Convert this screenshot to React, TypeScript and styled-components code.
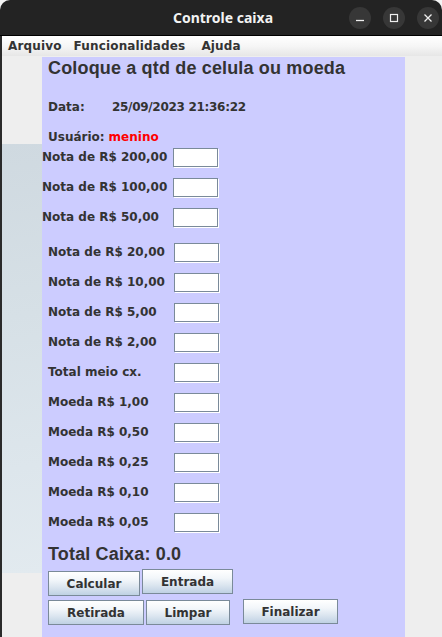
import React from 'react';
import styled, { createGlobalStyle } from 'styled-components';

const GlobalStyle = createGlobalStyle`
  html, body {
    margin: 0;
    padding: 0;
    background: #f4f4f4;
  }
  * {
    box-sizing: border-box;
  }
`;

const Window = styled.div`
  width: 442px;
  height: 637px;
  display: flex;
  flex-direction: column;
  overflow: hidden;
`;

const TitleBar = styled.div`
  height: 36px;
  flex: none;
  background: #232323;
  border-radius: 10px 10px 0 0;
  border-bottom: 1px solid #000;
  display: grid;
  grid-template-columns: 1fr auto 1fr;
  align-items: center;
`;

const Title = styled.div`
  grid-column: 2;
  padding-left: 4px;
  color: #f2f2f2;
  font-family: 'Noto Sans', 'DejaVu Sans', sans-serif;
  font-weight: 700;
  font-size: 14px;
`;

const Controls = styled.div`
  grid-column: 3;
  justify-self: end;
  display: flex;
  gap: 12px;
  padding-right: 3px;
`;

const CtrlButton = styled.div`
  width: 22px;
  height: 22px;
  border-radius: 50%;
  background: #373737;
  display: flex;
  align-items: center;
  justify-content: center;
`;

const MenuBar = styled.div`
  height: 20px;
  flex: none;
  display: flex;
  align-items: center;
  background: linear-gradient(#ffffff, #f6f6f6 50%, #e6e6e6);
  border-left: 2px solid #2a2a2a;
`;

const MenuItem = styled.div<{ $gap: number }>`
  margin-left: ${p => p.$gap}px;
  font-family: 'DejaVu Sans', sans-serif;
  font-weight: 700;
  font-size: 12px;
  letter-spacing: 0.15px;
  color: #333333;
`;

const Body = styled.div`
  flex: 1;
  display: flex;
  background: #eeeeee;
  border-left: 2px solid #2a2a2a;
  padding-top: 1px;
`;

const SideStrip = styled.div`
  width: 40px;
  flex: none;
  display: flex;
  flex-direction: column;
`;

const SidePicture = styled.div`
  margin-top: 87px;
  height: 429px;
  background: linear-gradient(170deg, #cfd9e0 0%, #d6e0e6 40%, #dde6ec 75%, #e2eaef 100%);
`;

const Panel = styled.div`
  width: 363px;
  flex: none;
  background: #ccccff;
  display: flex;
  flex-direction: column;
`;

const Heading = styled.div<{ $top?: number }>`
  margin-top: ${p => p.$top ?? 0}px;
  padding-left: 6px;
  font-family: 'Liberation Sans', Arial, sans-serif;
  font-weight: 700;
  font-size: 18px;
  line-height: 22px;
  letter-spacing: 0.16px;
  color: #333333;
  white-space: nowrap;
`;

const InfoLine = styled.div<{ $top: number }>`
  margin-top: ${p => p.$top}px;
  padding-left: 6px;
  display: flex;
  font-family: 'DejaVu Sans', sans-serif;
  font-weight: 700;
  font-size: 12px;
  line-height: 16px;
  color: #333333;
  white-space: nowrap;
`;

const InfoKey = styled.span<{ $width?: number }>`
  display: inline-block;
  width: ${p => (p.$width ? `${p.$width}px` : 'auto')};
  margin-right: ${p => (p.$width ? 0 : 4)}px;
`;

const DateText = styled.span`
  letter-spacing: -0.3px;
`;

const UserName = styled.span`
  color: #ff0000;
`;

const Row = styled.div<{ $top: number; $labelX: number; $fieldX: number }>`
  margin-top: ${p => p.$top}px;
  height: 19px;
  display: grid;
  grid-template-columns: ${p => p.$fieldX}px 45px;
  align-items: center;
  padding-left: ${p => p.$labelX}px;
`;

const RowLabel = styled.span`
  font-family: 'DejaVu Sans', sans-serif;
  font-weight: 700;
  font-size: 12px;
  line-height: 16px;
  color: #333333;
  white-space: nowrap;
  margin-top: -2px;
`;

const Field = styled.input`
  width: 45px;
  height: 19px;
  margin: 0;
  padding: 0 2px;
  border: 1px solid #7a8a99;
  box-shadow: 1px 1px 0 #ffffff;
  background: #ffffff;
  outline: none;
  font-family: 'DejaVu Sans', sans-serif;
  font-size: 12px;
`;

const ButtonRow = styled.div<{ $top: number }>`
  margin-top: ${p => p.$top}px;
  padding-left: 6px;
  display: flex;
  align-items: flex-start;
`;

const SwingButton = styled.button<{ $w: number; $dy?: number; $gap?: number }>`
  width: ${p => p.$w}px;
  height: 25px;
  margin: ${p => p.$dy ?? 0}px 0 0 ${p => p.$gap ?? 0}px;
  padding: 0;
  border: 1px solid #7a8a99;
  background: linear-gradient(#ffffff 0%, #f2f6fa 35%, #dce6f0 65%, #bfd1e3 100%);
  font-family: 'DejaVu Sans', sans-serif;
  font-weight: 700;
  font-size: 12px;
  color: #333333;
  cursor: pointer;
`;

type Denom = { label: string; top: number; labelX: number; fieldX: number };

const denoms: Denom[] = [
  { label: 'Nota de R$ 200,00', top: 3, labelX: 0, fieldX: 131 },
  { label: 'Nota de R$ 100,00', top: 11, labelX: 0, fieldX: 131 },
  { label: 'Nota de R$ 50,00', top: 11, labelX: 0, fieldX: 131 },
  { label: 'Nota de R$ 20,00', top: 16, labelX: 6, fieldX: 126 },
  { label: 'Nota de R$ 10,00', top: 11, labelX: 6, fieldX: 126 },
  { label: 'Nota de R$ 5,00', top: 11, labelX: 6, fieldX: 126 },
  { label: 'Nota de R$ 2,00', top: 11, labelX: 6, fieldX: 126 },
  { label: 'Total meio cx.', top: 11, labelX: 6, fieldX: 126 },
  { label: 'Moeda R$ 1,00', top: 11, labelX: 6, fieldX: 126 },
  { label: 'Moeda R$ 0,50', top: 11, labelX: 6, fieldX: 126 },
  { label: 'Moeda R$ 0,25', top: 11, labelX: 6, fieldX: 126 },
  { label: 'Moeda R$ 0,10', top: 11, labelX: 6, fieldX: 126 },
  { label: 'Moeda R$ 0,05', top: 11, labelX: 6, fieldX: 126 },
];

export default function App() {
  return (
    <>
      <GlobalStyle />
      <Window>
        <TitleBar>
          <Title>Controle caixa</Title>
          <Controls>
            <CtrlButton>
              <svg width="10" height="10" viewBox="0 0 10 10">
                <path d="M1 7.5h8" stroke="#eeeeee" strokeWidth="1.3" />
              </svg>
            </CtrlButton>
            <CtrlButton>
              <svg width="10" height="10" viewBox="0 0 10 10">
                <rect x="1.5" y="1.5" width="7" height="7" fill="none" stroke="#eeeeee" strokeWidth="1.2" />
              </svg>
            </CtrlButton>
            <CtrlButton>
              <svg width="10" height="10" viewBox="0 0 10 10">
                <path d="M1.5 1.5l7 7M8.5 1.5l-7 7" stroke="#eeeeee" strokeWidth="1.3" />
              </svg>
            </CtrlButton>
          </Controls>
        </TitleBar>

        <MenuBar>
          <MenuItem $gap={6}>Arquivo</MenuItem>
          <MenuItem $gap={12}>Funcionalidades</MenuItem>
          <MenuItem $gap={16}>Ajuda</MenuItem>
        </MenuBar>

        <Body>
          <SideStrip>
            <SidePicture />
          </SideStrip>

          <Panel>
            <Heading>Coloque a qtd de celula ou moeda</Heading>
            <InfoLine $top={20}>
              <InfoKey $width={64}>Data:</InfoKey>
              <DateText>25/09/2023 21:36:22</DateText>
            </InfoLine>
            <InfoLine $top={14}>
              <InfoKey>Usuário:</InfoKey>
              <UserName>menino</UserName>
            </InfoLine>

            {denoms.map(d => (
              <Row key={d.label} $top={d.top} $labelX={d.labelX} $fieldX={d.fieldX}>
                <RowLabel>{d.label}</RowLabel>
                <Field type="text" />
              </Row>
            ))}

            <Heading $top={11}>Total Caixa: 0.0</Heading>

            <ButtonRow $top={4}>
              <SwingButton $w={92} $dy={2}>Calcular</SwingButton>
              <SwingButton $w={91} $gap={2}>Entrada</SwingButton>
            </ButtonRow>
            <ButtonRow $top={3}>
              <SwingButton $w={96} $dy={1}>Retirada</SwingButton>
              <SwingButton $w={84} $dy={1} $gap={2}>Limpar</SwingButton>
              <SwingButton $w={95} $gap={13}>Finalizar</SwingButton>
            </ButtonRow>
          </Panel>
        </Body>
      </Window>
    </>
  );
}
